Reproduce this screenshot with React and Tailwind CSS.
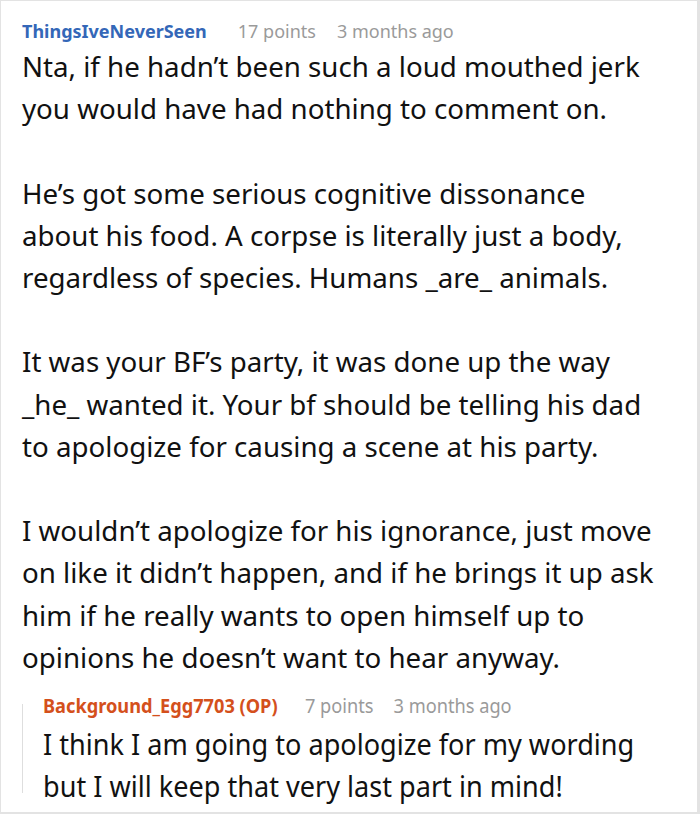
import React from 'react';

const comment = {
  author: 'ThingsIveNeverSeen',
  points: '17 points',
  time: '3 months ago',
  paragraphs: [
    ['Nta, if he hadn’t been such a loud mouthed jerk', 'you would have had nothing to comment on.'],
    [
      'He’s got some serious cognitive dissonance',
      'about his food. A corpse is literally just a body,',
      'regardless of species. Humans _are_ animals.',
    ],
    [
      'It was your BF’s party, it was done up the way',
      '_he_ wanted it. Your bf should be telling his dad',
      'to apologize for causing a scene at his party.',
    ],
    [
      'I wouldn’t apologize for his ignorance, just move',
      'on like it didn’t happen, and if he brings it up ask',
      'him if he really wants to open himself up to',
      'opinions he doesn’t want to hear anyway.',
    ],
  ],
};

const reply = {
  author: 'Background_Egg7703 (OP)',
  points: '7 points',
  time: '3 months ago',
  lines: ['I think I am going to apologize for my wording', 'but I will keep that very last part in mind!'],
};

export default function App() {
  return (
    <div
      className="w-[700px] h-[814px] overflow-hidden bg-white border-t border-l border-r-[3px] border-b-[2px] border-[#e3e3e3]"
      style={{ fontFamily: '"Noto Sans", "Open Sans", sans-serif' }}
    >
      <div className="pl-[21px] pr-[8px] pt-[16px]">
        {/* Header */}
        <div className="flex items-center h-[28px] text-[18px] whitespace-nowrap">
          <span className="font-bold text-[#3467b8]">{comment.author}</span>
          <span className="ml-[31px] text-[#9a9a9a]">{comment.points}</span>
          <span className="ml-[21px] text-[#9a9a9a]">{comment.time}</span>
        </div>

        {/* Body */}
        <div className="text-[27.7px] leading-[42.2px] text-[#111] whitespace-nowrap">
          {comment.paragraphs.map((lines, i) => (
            <p key={i} className={i > 0 ? 'mt-[42.2px]' : ''}>
              {lines.map((line, j) => (
                <span key={j} className="block">
                  {line}
                </span>
              ))}
            </p>
          ))}
        </div>

        {/* Reply */}
        <div className="mt-[14px] flex">
          <div className="w-px bg-[#dedede] mt-[12px] mb-[14px]"></div>
          <div className="pl-[20px] whitespace-nowrap">
            <div className="flex items-center h-[28px] text-[20px] origin-left scale-x-[0.91]">
              <span className="font-bold text-[#d4501c]">{reply.author}</span>
              <span className="ml-[30px] text-[#9a9a9a]">{reply.points}</span>
              <span className="ml-[22px] text-[#9a9a9a]">{reply.time}</span>
            </div>
            <p className="mt-[3px] text-[29px] leading-[42px] text-[#111] origin-left scale-x-[0.934]">
              {reply.lines.map((line, j) => (
                <span key={j} className="block">
                  {line}
                </span>
              ))}
            </p>
          </div>
        </div>
      </div>
    </div>
  );
}
